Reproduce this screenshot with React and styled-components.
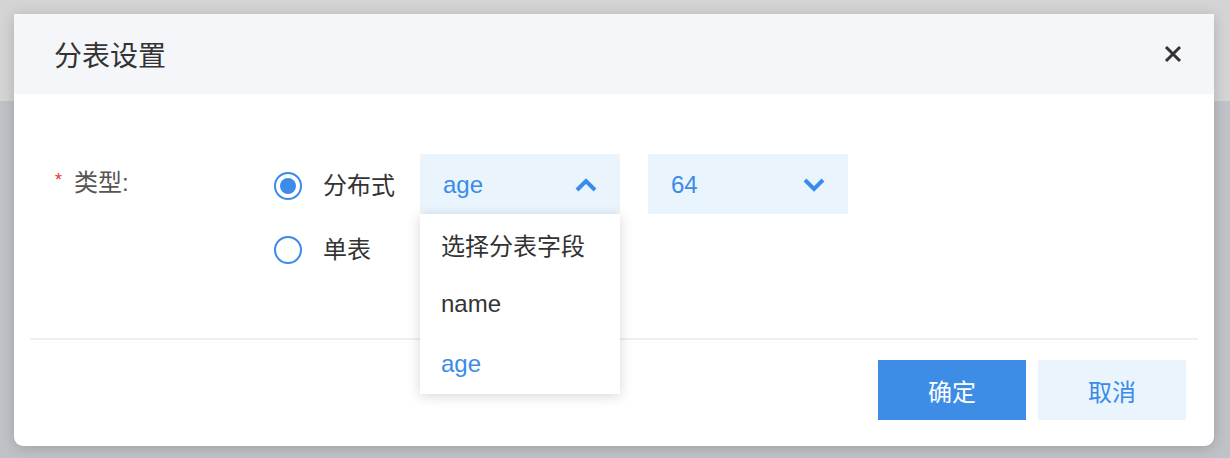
import React from 'react'
import styled, { createGlobalStyle } from 'styled-components'

const GlobalStyle = createGlobalStyle`
  html, body {
    margin: 0;
    padding: 0;
  }
  body {
    font-family: "Liberation Sans", "Noto Sans CJK SC", sans-serif;
    color: #333;
  }
`

const BLUE = '#3b8be8'

function Chevron({ up }) {
  return (
    <svg width="22" height="14" viewBox="0 0 22 14">
      <polyline
        points={up ? '2,12 11,3 20,12' : '2,2 11,11 20,2'}
        fill="none"
        stroke={BLUE}
        strokeWidth="4"
      />
    </svg>
  )
}

function CloseIcon() {
  return (
    <svg width="18" height="18" viewBox="0 0 18 18">
      <path d="M2 2 L16 16 M16 2 L2 16" stroke="#333" strokeWidth="3" />
    </svg>
  )
}

function App() {
  return (
    <>
      <GlobalStyle />
      <Page>
        <PageTop />
        <PageBody />
        <Modal>
          <Header>
            <Title>分表设置</Title>
            <CloseButton><CloseIcon /></CloseButton>
          </Header>
          <Body>
            <FormRow>
              <Label><Required>*</Required>类型:</Label>
              <Options>
                <OptionRow>
                  <Radio>
                    <RadioCircle checked />
                    <RadioText>分布式</RadioText>
                  </Radio>
                  <SelectWrap>
                    <Select>
                      <SelectValue>age</SelectValue>
                      <Chevron up />
                    </Select>
                    <Menu>
                      <MenuItem>选择分表字段</MenuItem>
                      <MenuItem>name</MenuItem>
                      <MenuItem active>age</MenuItem>
                    </Menu>
                  </SelectWrap>
                  <SelectWrap>
                    <Select>
                      <SelectValue>64</SelectValue>
                      <Chevron />
                    </Select>
                  </SelectWrap>
                </OptionRow>
                <OptionRow second>
                  <Radio>
                    <RadioCircle />
                    <RadioText>单表</RadioText>
                  </Radio>
                </OptionRow>
              </Options>
            </FormRow>
          </Body>
          <Divider />
          <Footer>
            <Button primary>确定</Button>
            <Button>取消</Button>
          </Footer>
        </Modal>
      </Page>
    </>
  )
}

const Page = styled.div`
  position: relative;
  width: 1230px;
  height: 458px;
  display: flex;
  flex-direction: column;
  overflow: hidden;
`
const PageTop = styled.div`
  height: 101px;
  background: #d4d4d4;
`
const PageBody = styled.div`
  flex: 1;
  background: #bfc2c6;
`
const Modal = styled.div`
  position: absolute;
  left: 14px;
  top: 14px;
  width: 1200px;
  height: 432px;
  background: #fff;
  border-radius: 0 0 9px 9px;
  box-shadow: 0 2px 14px rgba(0, 0, 0, 0.18);
  display: flex;
  flex-direction: column;
`
const Header = styled.div`
  height: 80px;
  background: #f5f6fa;
  display: flex;
  align-items: center;
  justify-content: space-between;
  padding: 0 32px 0 40px;
`
const Title = styled.div`
  font-size: 28px;
  color: #333;
`
const CloseButton = styled.div`
  display: flex;
  align-items: center;
`
const Body = styled.div`
  padding: 60px 41px 0;
`
const FormRow = styled.div`
  display: flex;
`
const Label = styled.div`
  width: 219px;
  height: 60px;
  display: flex;
  align-items: center;
  font-size: 24px;
  color: #555;
  margin-top: -4px;
`
const Required = styled.span`
  color: #e8372c;
  font-size: 18px;
  margin-right: 12px;
`
const Options = styled.div`
  display: flex;
  flex-direction: column;
`
const OptionRow = styled.div`
  display: flex;
  align-items: center;
  height: 60px;
  margin-top: ${p => (p.second ? '4px' : '0')};
`
const Radio = styled.div`
  width: 146px;
  display: flex;
  align-items: center;
  margin-top: 2px;
`
const RadioCircle = styled.span`
  box-sizing: border-box;
  width: 28px;
  height: 28px;
  border-radius: 50%;
  border: 2px solid ${BLUE};
  display: flex;
  align-items: center;
  justify-content: center;
  margin-top: 2px;
  &::after {
    content: '';
    width: 16px;
    height: 16px;
    border-radius: 50%;
    background: ${BLUE};
    display: ${p => (p.checked ? 'block' : 'none')};
  }
`
const RadioText = styled.span`
  margin-left: 21px;
  font-size: 24px;
  color: #333;
  margin-top: -4px;
`
const SelectWrap = styled.div`
  position: relative;
  width: 200px;
  margin-right: 28px;
`
const Select = styled.div`
  height: 60px;
  background: #eaf4fd;
  display: flex;
  align-items: center;
  justify-content: space-between;
  padding: 2px 23px 0 23px;
  box-sizing: border-box;
`
const SelectValue = styled.span`
  font-size: 24px;
  color: ${BLUE};
`
const Menu = styled.div`
  position: absolute;
  top: 60px;
  left: 0;
  width: 200px;
  background: #fff;
  box-shadow: 0 2px 12px rgba(0, 0, 0, 0.16);
  z-index: 10;
`
const MenuItem = styled.div`
  height: 60px;
  display: flex;
  align-items: center;
  padding-left: 21px;
  font-size: 24px;
  color: ${p => (p.active ? BLUE : '#333')};
`
const Divider = styled.div`
  height: 2px;
  background: #efefef;
  margin: 60px 16px 0;
`
const Footer = styled.div`
  display: flex;
  justify-content: flex-end;
  gap: 12px;
  padding: 20px 28px 0;
`
const Button = styled.div`
  width: 148px;
  height: 60px;
  display: flex;
  align-items: center;
  justify-content: center;
  font-size: 24px;
  background: ${p => (p.primary ? '#3d8ce6' : '#eaf4fd')};
  color: ${p => (p.primary ? '#fff' : BLUE)};
`

export default App
